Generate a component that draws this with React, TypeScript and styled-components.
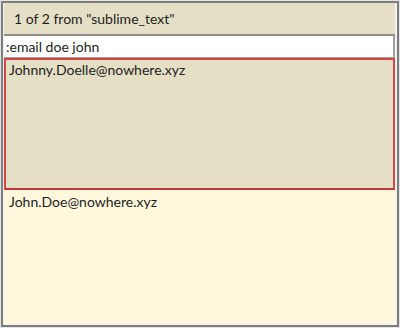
import React from "react";
import styled, { createGlobalStyle } from "styled-components";

const Global = createGlobalStyle`
  html, body {
    margin: 0;
    padding: 0;
    background: #f0f0f0;
  }
  body {
    font-family: "Lato", "Noto Sans", sans-serif;
    font-size: 14px;
    color: #1e1e1e;
  }
`;

const Frame = styled.div`
  width: 400px;
  height: 328px;
  box-sizing: border-box;
  border: 1px solid #e4e4e4;
  background: #e4e4e4;
`;

const Inner = styled.div`
  height: 100%;
  box-sizing: border-box;
  border: 2px solid #7d7d7d;
  display: flex;
  flex-direction: column;
  padding: 0 2px 1px 1px;
  background: #f2f2f2;
`;

const Header = styled.div`
  height: 31px;
  flex: none;
  display: flex;
  align-items: center;
  padding-left: 10px;
  background: #e5dfc6;
  border-bottom: 2px solid #8f8f8f;
`;

const Query = styled.div`
  height: 21px;
  flex: none;
  display: flex;
  align-items: center;
  padding-left: 2px;
  background: #ffffff;
  border-right: 2px solid #a0a0a0;
  border-bottom: 1px solid #9a9a9a;
`;

const List = styled.div`
  flex: 1;
  display: flex;
  flex-direction: column;
  background: #fff8dc;
`;

const Item = styled.div<{ $selected?: boolean }>`
  box-sizing: border-box;
  height: ${(p) => (p.$selected ? "132px" : "auto")};
  flex: ${(p) => (p.$selected ? "none" : "1")};
  padding: ${(p) => (p.$selected ? "1px 0 0 3px" : "3px 0 0 5px")};
  background: ${(p) => (p.$selected ? "#e5dfc6" : "#fff8dc")};
  border: ${(p) => (p.$selected ? "2px solid #d64545" : "none")};
  border-bottom-color: ${(p) => (p.$selected ? "#c83434" : "transparent")};
  line-height: 18px;
`;

export default function App() {
  return (
    <>
      <Global />
      <Frame>
        <Inner>
          <Header>1 of 2 from "sublime_text"</Header>
          <Query>:email doe john</Query>
          <List>
            <Item $selected>Johnny.Doelle@nowhere.xyz</Item>
            <Item>John.Doe@nowhere.xyz</Item>
          </List>
        </Inner>
      </Frame>
    </>
  );
}
